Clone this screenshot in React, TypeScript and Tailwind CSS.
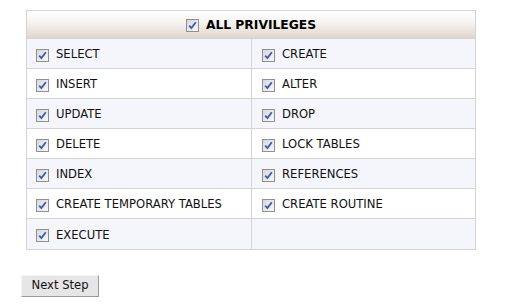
import React from "react";

const Check = () => (
  <span className="inline-flex h-[13px] w-[13px] shrink-0 items-center justify-center border border-[#8f8f8f] bg-[linear-gradient(135deg,#d8d8d8,#f8f8f8)]">
    <svg width="9" height="9" viewBox="0 0 9 9">
      <path d="M1.2 4.6 L3.4 7 L7.8 1.2" fill="none" stroke="#3c5bb0" strokeWidth="1.8" />
    </svg>
  </span>
);

const rows: [string, string][] = [
  ["SELECT", "CREATE"],
  ["INSERT", "ALTER"],
  ["UPDATE", "DROP"],
  ["DELETE", "LOCK TABLES"],
  ["INDEX", "REFERENCES"],
  ["CREATE TEMPORARY TABLES", "CREATE ROUTINE"],
  ["EXECUTE", ""],
];

export default function App() {
  return (
    <div className="h-[307px] w-[507px] bg-white pl-[26px] pt-[10px] text-[11.6px] text-[#111] [font-family:'DejaVu_Sans',Verdana,sans-serif]">
      <div className="w-[450px] border border-[#d3d3d3]">
        <div className="flex h-[28px] items-center justify-center gap-[7px] border-b border-[#d3d3d3] bg-[linear-gradient(to_bottom,#ffffff_0%,#f7f5f2_40%,#e0d5cd_100%)] pt-[1px]">
          <Check />
          <span className="text-[12.3px] font-bold text-black">ALL PRIVILEGES</span>
        </div>
        {rows.map(([a, b], i) => (
          <div
            key={i}
            className={`flex h-[30px] ${i < rows.length - 1 ? "border-b border-[#d3d3d3]" : ""} ${i % 2 === 0 ? "bg-[#f4f6fb]" : "bg-white"}`}
          >
            <div className="flex w-[225px] items-center gap-[7px] border-r border-[#d3d3d3] pl-[9px] pt-[3px]">
              <Check />
              <span>{a}</span>
            </div>
            <div className="flex flex-1 items-center gap-[7px] pl-[10px] pt-[3px]">
              {b && (
                <>
                  <Check />
                  <span>{b}</span>
                </>
              )}
            </div>
          </div>
        ))}
      </div>
      <button className="ml-[-5px] mt-[25px] flex h-[22px] w-[78px] items-center justify-center border border-t-[#f4f4f4] border-l-[#f4f4f4] border-r-[#9a9a9a] border-b-[#9a9a9a] bg-[#e6e6e6] text-[11.6px] text-[#111] [font-family:'DejaVu_Sans',Verdana,sans-serif]">
        Next Step
      </button>
    </div>
  );
}
